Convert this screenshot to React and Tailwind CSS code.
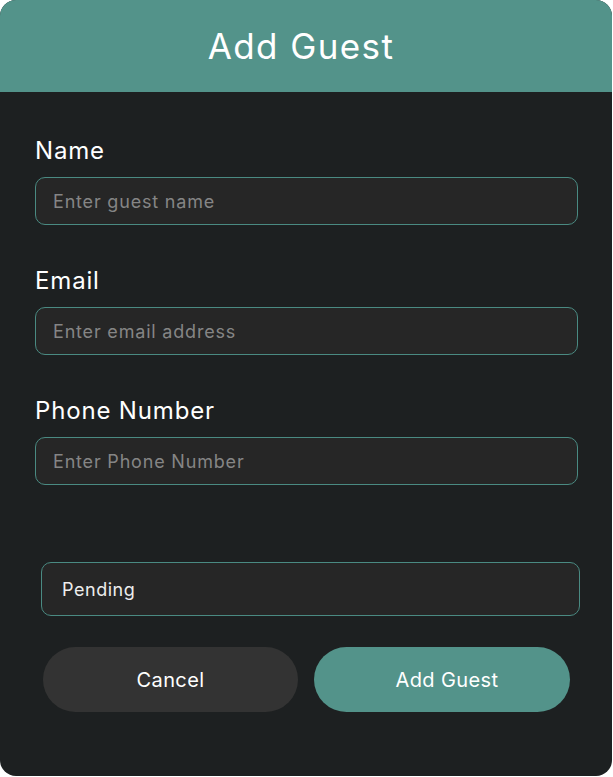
import { useState } from 'react';

const fields = [
  { label: 'Name', placeholder: 'Enter guest name', type: 'text' },
  { label: 'Email', placeholder: 'Enter email address', type: 'email' },
  { label: 'Phone Number', placeholder: 'Enter Phone Number', type: 'tel' },
];

const AddGuest = () => {
  const [status, setStatus] = useState('Pending');

  return (
    <div className="bg-white min-h-screen font-['Inter',sans-serif]">
      <div className="w-[612px] h-[776px] bg-[#1d2021] rounded-[16px] overflow-hidden flex flex-col">
        {/* Header */}
        <div className="h-[92px] bg-[#53938a] flex items-center justify-center pr-[10px]">
          <h1 className="text-[35px] tracking-[0.04em] text-white leading-none">Add Guest</h1>
        </div>

        {/* Form */}
        <div className="px-[35px] pt-[44px] flex flex-col">
          {fields.map((f, idx) => (
            <div key={f.label} className={idx > 0 ? 'mt-[41px]' : ''}>
              <label className="block text-[24px] tracking-[0.035em] leading-[29px] text-white mb-[12px]">{f.label}</label>
              <input
                type={f.type}
                placeholder={f.placeholder}
                className="w-[543px] h-[48px] rounded-[10px] border border-[#4a8a82] bg-[#262626] px-[17px] text-[18px] tracking-[0.045em] text-white placeholder:text-[#858585] outline-none"
              />
            </div>
          ))}

          <div className="mt-[77px] ml-[6px] w-[539px] h-[54px] rounded-[10px] border border-[#4a8a82] bg-[#262626] flex items-center px-[20px]">
            <span className="text-[18px] tracking-[0.03em] text-[#ededed]">{status}</span>
          </div>

          <div className="mt-[31px] ml-[8px] flex gap-[16px]">
            <button
              onClick={() => setStatus('Pending')}
              className="w-[255px] h-[65px] rounded-full bg-[#333333] text-white text-[20px] tracking-[0.02em]"
            >
              Cancel
            </button>
            <button className="w-[256px] h-[65px] rounded-full bg-[#53938a] pl-[10px] text-white text-[20px] tracking-[0.02em]">
              Add Guest
            </button>
          </div>
        </div>
      </div>
    </div>
  );
};

export default function App() {
  return <AddGuest />;
}
